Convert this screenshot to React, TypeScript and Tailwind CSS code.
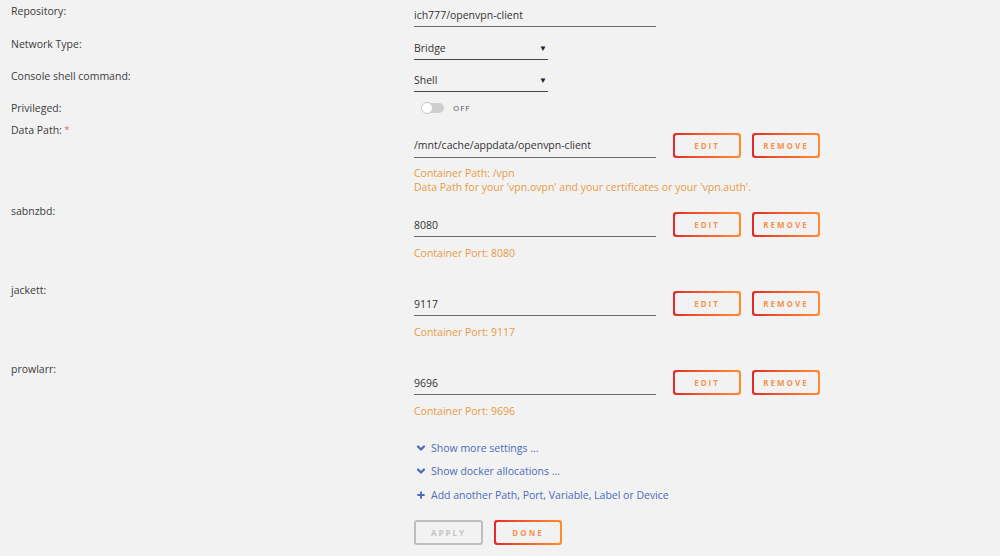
import { ChevronDown, Plus } from "lucide-react"

const font = "font-['Open_Sans',sans-serif]"

function OrangeButton({ label }: { label: string }) {
  return (
    <div className="w-[68px] h-[25px] rounded-[3px] p-[2px] bg-linear-to-r from-[#e22828] to-[#ff8c2f]">
      <div className="w-full h-full rounded-[2px] bg-[#f2f2f2] flex items-center justify-center text-[8px] font-bold tracking-[2px] text-[#f3944f]">
        {label}
      </div>
    </div>
  )
}

function Label({ children, pt = "pt-[4px]" }: { children: React.ReactNode; pt?: string }) {
  return <div className={`w-[414px] shrink-0 pl-[11px] ${pt} text-[#3c3c3c]`}>{children}</div>
}

function PortRow({ name, port }: { name: string; port: string }) {
  return (
    <div className="flex h-[79px]">
      <Label>{name}</Label>
      <div className="pt-[12px]">
        <div className="flex items-end">
          <div className="w-[242px] h-[25px] border-b border-[#6b6b6b] flex items-end pb-[4px] text-[#333]">{port}</div>
          <div className="ml-[17px] flex gap-[11px]">
            <OrangeButton label="EDIT" />
            <OrangeButton label="REMOVE" />
          </div>
        </div>
        <div className="mt-[9px] text-[#e99a45]">Container Port: {port}</div>
      </div>
    </div>
  )
}

export default function App() {
  return (
    <div className={`w-[1000px] h-[556px] bg-[#f2f2f2] ${font} text-[10.5px] leading-[14px] overflow-hidden`}>
      {/* Repository */}
      <div className="flex h-[32px]">
        <Label>Repository:</Label>
        <div className="pt-[8px]">
          <div className="w-[242px] border-b border-[#6b6b6b] pb-[4px] text-[#333]">ich777/openvpn-client</div>
        </div>
      </div>

      {/* Network type */}
      <div className="flex h-[32px]">
        <Label pt="pt-[5px]">Network Type:</Label>
        <div className="pt-[9px]">
          <div className="w-[134px] border-b border-[#444] pb-[4px] flex justify-between text-[#333]">
            <span>Bridge</span>
            <span className="text-[8px] pr-[1px] text-[#222]">▼</span>
          </div>
        </div>
      </div>

      {/* Console */}
      <div className="flex h-[32px]">
        <Label pt="pt-[5px]">Console shell command:</Label>
        <div className="pt-[9px]">
          <div className="w-[134px] border-b border-[#444] pb-[4px] flex justify-between text-[#333]">
            <span>Shell</span>
            <span className="text-[8px] pr-[1px] text-[#222]">▼</span>
          </div>
        </div>
      </div>

      {/* Privileged */}
      <div className="flex h-[23px]">
        <Label pt="pt-[5px]">Privileged:</Label>
        <div className="pt-[1px] pl-[8px] flex items-center h-[22px]">
          <div className="relative w-[22px] h-[10px] rounded-full bg-[#cfcfcf]">
            <div className="absolute left-[-1px] top-[-1px] w-[12px] h-[12px] rounded-full bg-white border border-[#c8c8c8]" />
          </div>
          <span className="ml-[9px] text-[8px] tracking-[1px] text-[#555]">OFF</span>
        </div>
      </div>

      {/* Data path */}
      <div className="flex h-[81px]">
        <Label>
          Data Path: <span className="text-[9px] align-top text-[#f05a5a]">*</span>
        </Label>
        <div className="pt-[14px]">
          <div className="flex items-end">
            <div className="w-[242px] h-[25px] border-b border-[#6b6b6b] flex items-end pb-[5px] text-[#333]">
              /mnt/cache/appdata/openvpn-client
            </div>
            <div className="ml-[17px] flex gap-[11px]">
              <OrangeButton label="EDIT" />
              <OrangeButton label="REMOVE" />
            </div>
          </div>
          <div className="mt-[8px] text-[#e99a45]">
            <div>Container Path: /vpn</div>
            <div>Data Path for your 'vpn.ovpn' and your certificates or your 'vpn.auth'.</div>
          </div>
        </div>
      </div>

      <PortRow name="sabnzbd:" port="8080" />
      <PortRow name="jackett:" port="9117" />
      <PortRow name="prowlarr:" port="9696" />

      {/* Links + buttons */}
      <div className="pl-[414px] pt-[4px] text-[#4a6cb8]">
        <div className="flex items-center h-[14px]">
          <ChevronDown size={12} strokeWidth={4.5} className="ml-[1px] mr-[4px]" />
          <span>Show more settings ...</span>
        </div>
        <div className="flex items-center h-[14px] mt-[9px]">
          <ChevronDown size={12} strokeWidth={4.5} className="ml-[1px] mr-[4px]" />
          <span>Show docker allocations ...</span>
        </div>
        <div className="flex items-center h-[14px] mt-[10px]">
          <Plus size={10} strokeWidth={4.5} className="ml-[2px] mr-[5px]" />
          <span>Add another Path, Port, Variable, Label or Device</span>
        </div>
        <div className="flex gap-[11px] mt-[18px]">
          <div className="w-[69px] h-[25px] rounded-[3px] border-2 border-[#bdbdbd] flex items-center justify-center text-[8px] font-bold tracking-[2px] text-[#c4c4c4]">
            APPLY
          </div>
          <OrangeButton label="DONE" />
        </div>
      </div>
    </div>
  )
}
